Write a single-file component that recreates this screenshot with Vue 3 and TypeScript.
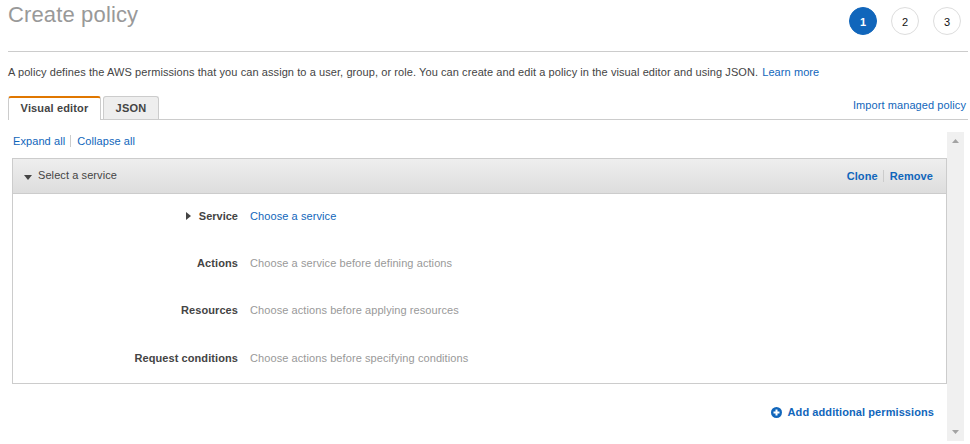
<script setup lang="ts">
import { ref } from 'vue'

interface PolicyRow {
  label: string
  value: string
  active: boolean
  kind: string
}

const step = ref(1)
const steps: number[] = [1, 2, 3]
const rows: PolicyRow[] = [
  { label: 'Service', value: 'Choose a service', active: true, kind: 'service' },
  { label: 'Actions', value: 'Choose a service before defining actions', active: false, kind: 'actions' },
  { label: 'Resources', value: 'Choose actions before applying resources', active: false, kind: 'resources' },
  { label: 'Request conditions', value: 'Choose actions before specifying conditions', active: false, kind: 'conditions' },
]
</script>

<template>
  <main class="page">
    <header class="header">
      <h1>Create policy</h1>
      <ol class="steps">
        <li v-for="n in steps" :key="n" :class="{ current: n === step }">{{ n }}</li>
      </ol>
    </header>
    <p class="intro">
      <span class="intro-text">A policy defines the AWS permissions that you can assign to a user, group, or role. You can create and edit a policy in the visual editor and using JSON.</span>
      <a>Learn more</a>
    </p>
    <nav class="tabs">
      <div class="tab selected"><span>Visual editor</span></div>
      <div class="tab json"><span>JSON</span></div>
      <a class="import">Import managed policy</a>
    </nav>
    <div class="workspace">
      <section class="editor">
        <div class="toggles">
          <a>Expand all</a><i class="divider"></i><a>Collapse all</a>
        </div>
        <div class="panel">
          <div class="panel-head">
            <svg class="caret" width="8" height="5" viewBox="0 0 8 5"><path d="M0 0H8L4 5Z" fill="#444" /></svg>
            <span class="panel-title">Select a service</span>
            <a class="clone">Clone</a><i class="divider"></i><a class="remove">Remove</a>
          </div>
          <div class="rows">
            <div v-for="row in rows" :key="row.kind" class="row" :class="row.kind">
              <div class="label">
                <svg v-if="row.active" class="arrow" width="5" height="8" viewBox="0 0 5 8"><path d="M0 0L5 4L0 8Z" fill="#444" /></svg>
                <span>{{ row.label }}</span>
              </div>
              <a v-if="row.active">{{ row.value }}</a>
              <span v-else class="hint">{{ row.value }}</span>
            </div>
          </div>
        </div>
        <div class="add">
          <svg width="11" height="11" viewBox="0 0 11 11"><circle cx="5.5" cy="5.5" r="5.5" fill="#1166bb" /><path d="M5.5 2.5V8.5M2.5 5.5H8.5" stroke="#fff" stroke-width="2" /></svg>
          <a>Add additional permissions</a>
        </div>
      </section>
      <div class="scrollbar">
        <svg width="7" height="4" viewBox="0 0 7 4"><path d="M0 4L3.5 0L7 4Z" fill="#a3a3a3" /></svg>
        <svg width="7" height="4" viewBox="0 0 7 4"><path d="M0 0H7L3.5 4Z" fill="#a3a3a3" /></svg>
      </div>
    </div>
  </main>
</template>

<style>
body { background: #fff; overflow: hidden; }
</style>

<style scoped>
* { box-sizing: border-box; }
.page {
  width: 970px;
  height: 444px;
  padding: 0 2px 0 8px;
  font: 11px/14px "Liberation Sans", Arial, sans-serif;
  letter-spacing: 0.085px;
  color: #444;
  white-space: nowrap;
}
a { color: #1166bb; }
.header {
  display: flex;
  justify-content: space-between;
  height: 52px;
  border-bottom: 1px solid #ccc;
}
h1 { margin: 2px 0 0; font-size: 22px; line-height: 26px; font-weight: 400; letter-spacing: 0.14px; color: #999; }
.steps { display: flex; gap: 14px; margin: 7px 7px 0 0; padding: 0; list-style: none; }
.steps li {
  width: 28px;
  height: 28px;
  border: 1px solid #ddd;
  border-radius: 50%;
  line-height: 28px;
  text-align: center;
  color: #111;
}
.steps .current { background: #1166bb; border-color: #1166bb; color: #fff; font-weight: 700; }
.intro { display: flex; gap: 4px; margin: 13px 0 0; }
.intro-text { letter-spacing: 0.082px; }
.tabs {
  display: flex;
  align-items: flex-end;
  gap: 2px;
  height: 24px;
  margin-top: 17px;
  border-bottom: 1px solid #ccc;
}
.tab {
  height: 23px;
  border: 1px solid #ccc;
  border-bottom: 0;
  border-radius: 3px 3px 0 0;
  background: #eee;
  font-weight: 700;
  line-height: 23px;
  text-align: center;
}
.tab.selected {
  width: 93px;
  height: 24px;
  margin-bottom: -1px;
  border-top: 2px solid #e07700;
  background: #fff;
  line-height: 21px;
  letter-spacing: 0.15px;
}
.tab.json { width: 56px; letter-spacing: 0.2px; }
.import { margin: 0 2px 7px auto; }
.workspace { display: flex; height: 309px; margin-top: 12px; }
.editor { width: 939px; padding-left: 4px; }
.toggles { display: flex; align-items: center; height: 26px; padding-bottom: 9px; padding-left: 1px; }
.divider { width: 1px; height: 12px; margin: 0 6px; background: #ccc; }
.toggles .divider { margin-left: 5px; }
.panel { height: 226px; border: 1px solid #ccc; }
.panel-head {
  display: flex;
  align-items: center;
  height: 35px;
  padding: 0 13px 0 11px;
  border-bottom: 1px solid #ccc;
  background: linear-gradient(#eee, #ddd);
}
.panel-head .divider { margin-left: 5px; }
.caret { margin: 3px 6px 0 0; }
.panel-title { margin: 0 auto 2px 0; }
.clone, .remove, .add a { font-weight: 700; }
.rows { padding-top: 15px; }
.row { display: flex; height: 47px; }
.row.conditions { padding-top: 1px; }
.label { display: flex; justify-content: flex-end; width: 225px; margin-right: 12px; font-weight: 700; }
.service .label { letter-spacing: 0; }
.arrow { margin: 3px 8px 0 0; }
.hint { color: #999; }
.add { display: flex; align-items: center; justify-content: flex-end; gap: 6px; margin: 21px 13px 0 0; }
.scrollbar {
  display: flex;
  flex-direction: column;
  align-items: center;
  justify-content: space-between;
  width: 17px;
  padding: 7px 0;
  background: #f0f0f0;
}
</style>
